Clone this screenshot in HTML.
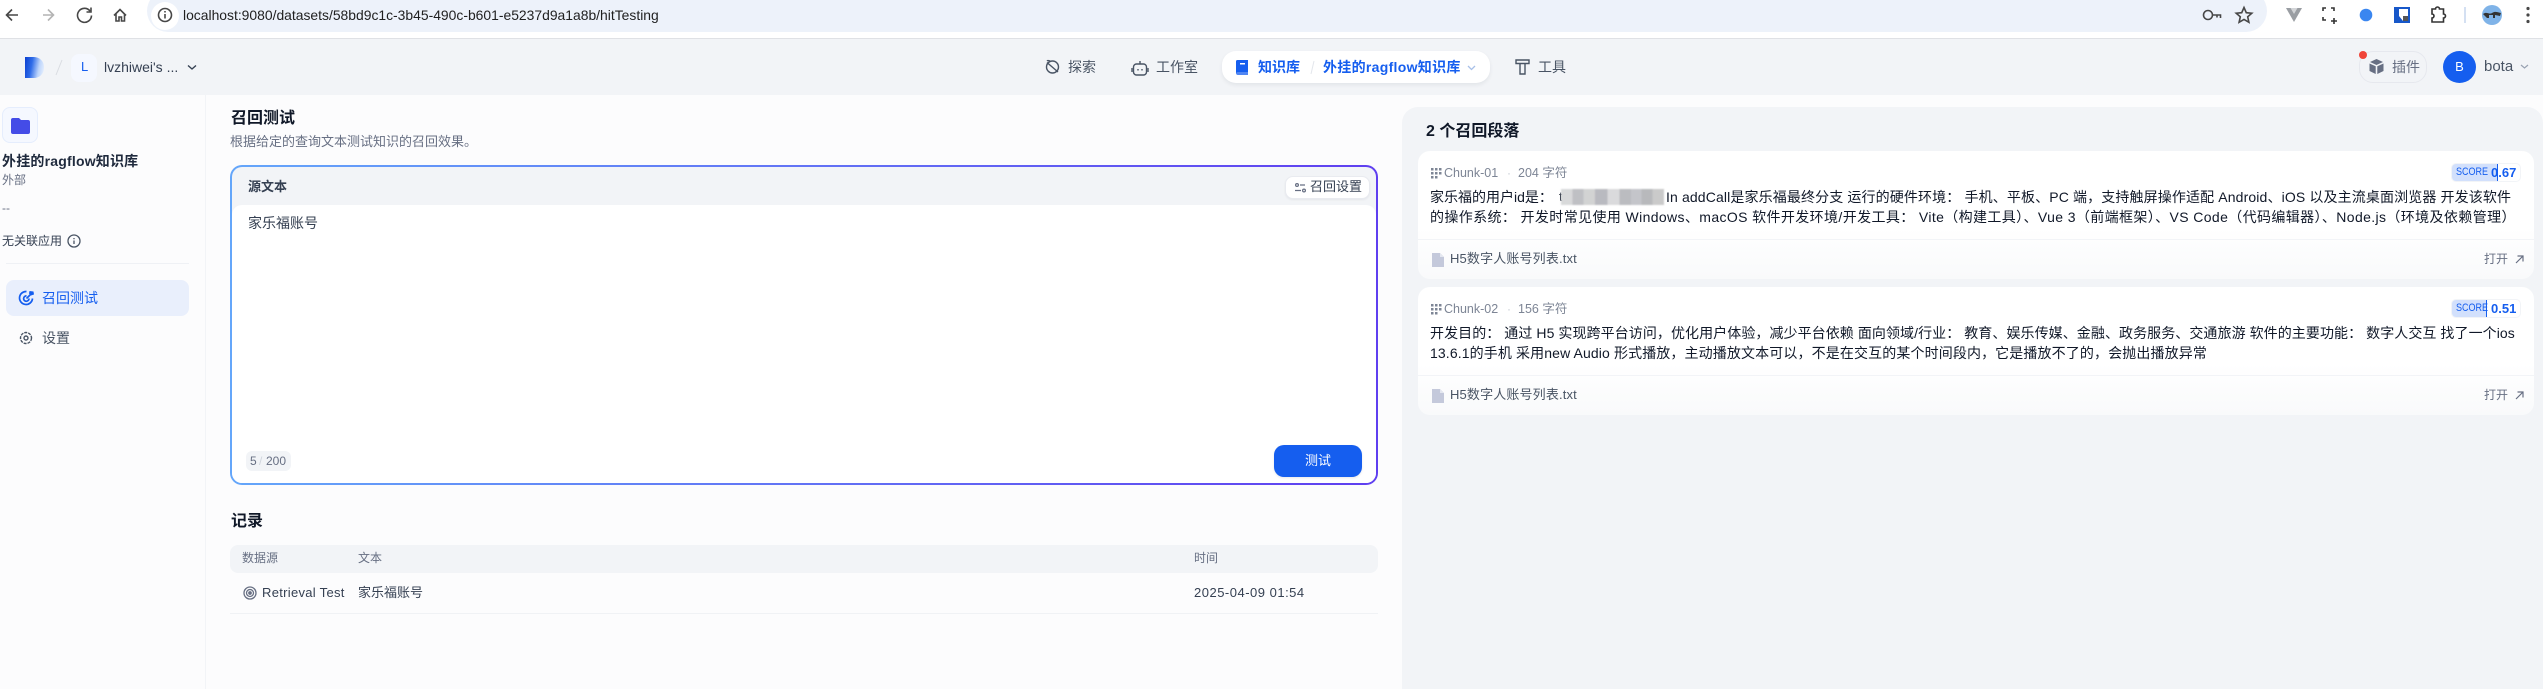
<!DOCTYPE html>
<html lang="zh"><head><meta charset="utf-8"><title>hitTesting</title>
<style>
*{box-sizing:border-box}
html,body{margin:0;padding:0;width:2543px;height:689px;overflow:hidden;background:#fcfcfd;font-family:"Liberation Sans","Noto Sans CJK SC",sans-serif;color:#354052}
.t{position:absolute;white-space:nowrap;line-height:20px;font-size:14px}
.b{position:absolute}
svg{position:absolute;overflow:visible}
.g{color:#676f83}
.k{color:#101828}
.sc{font-size:11px;color:#155eef;transform:scaleX(.82);transform-origin:left center}
.card{position:absolute;left:1418px;width:1116px;height:128px;border-radius:12px;background:linear-gradient(180deg,#fff 0%,#fff 60%,#f9fafb 100%)}
</style></head><body>
<!-- browser bar -->
<div class="b" style="left:0;top:0;width:2543px;height:38px;background:#fff"></div>
<div class="b" style="left:0;top:38px;width:2543px;height:1px;background:#dfe1e5"></div>
<div class="b" style="left:147px;top:-10px;width:2120px;height:42px;background:#edf2fa;border-radius:21px"></div>
<div class="b" style="left:151px;top:2px;width:28px;height:28px;background:#fff;border-radius:50%"></div>
<svg style="left:0;top:0" width="2543" height="38" fill="none" stroke="#474747" stroke-width="1.6">
<path d="M18 15H7M12 9.500 6.500 15l5.500 5.500"/>
<path d="M54 15H43M48 9.500 53.500 15 48 20.500" stroke="#b4b4b4"/>
<path d="M90 11a7 7 0 1 0 1.500 4.500M91 7.500v4.500h-4.500"/>
<path d="M114 15.500 120 9.500l6 6M116 14v7h3v-4h2.500v4h3v-7"/>
<circle cx="165" cy="15" r="6.500"/><path d="M165 14v4.500M165 11v1.500"/>
<circle cx="2208" cy="15" r="4.500"/><path d="M2212.500 15h8v3M2217 15v2.500"/>
<path d="M2244 7.500l2.300 5.200 5.500.5-4.100 3.600 1.200 5.500-4.900-2.900-4.900 2.900 1.200-5.500-4.100-3.600 5.500-.5z"/>
<path d="M2286 8h16l-8 14z" fill="#9a9ea3" stroke="none"/><path d="M2290.500 8h7l-3.500 6z" fill="#d3d5d8" stroke="none"/>
<path d="M2323 11V8h3M2331 8h3v3M2323 17v3h3M2337 21h-6M2334 18v6" stroke="#333"/>
<circle cx="2366" cy="15" r="6.300" fill="#3a86f0" stroke="none"/>
<path d="M2394 7h16v16h-16z" fill="#1757c9" stroke="none"/><path d="M2399 9h9v12h-5l-4-5z" fill="#fff" stroke="none"/><rect x="2403" y="16" width="5" height="5" fill="#555" stroke="none"/>
<path d="M2432 9h3.500a2 2 0 0 1 4 0h4v5a2 2 0 0 1 0 4v4h-11.500v-4a2 2 0 0 0 0-4z" stroke="#333"/>
<path d="M2465 7v16" stroke="#c9d8ef"/>
<circle cx="2492" cy="15" r="10" fill="#7fb3e8" stroke="none"/><path d="M2483 14c4-3 6 1 9-1s5-1 9 0l-1 3-5-1v3h-2v-3h-4v3h-2z" fill="#333" stroke="none"/>
<g fill="#474747" stroke="none"><circle cx="2528" cy="8.500" r="1.600"/><circle cx="2528" cy="15" r="1.600"/><circle cx="2528" cy="21.500" r="1.600"/></g>
</svg>
<div class="t" style="left:183px;top:5px;font-size:13.900px;color:#1f1f1f">localhost:9080/datasets/58bd9c1c-3b45-490c-b601-e5237d9a1a8b/hitTesting</div>

<!-- app header -->
<div class="b" style="left:0;top:39px;width:2543px;height:56px;background:#f2f4f7"></div>
<div class="b" style="left:25px;top:57px;width:19px;height:21px;border-radius:0 10px 10px 0;background:linear-gradient(100deg,#0b3fd0 0%,#2f6ce8 35%,#bcd4fb 70%,#eef4fe 100%)"></div>
<svg style="left:0;top:0" width="120" height="95" fill="none"><path d="M62 60 56 75" stroke="#d9dce2"/><path d="M188 65.500l4 3.500 4-3.500" stroke="#354052" stroke-width="1.400"/></svg>
<div class="b" style="left:71px;top:54px;width:26px;height:28px;border-radius:8px;background:#f5f8ff"></div>
<div class="t" style="left:81px;top:57px;color:#155eef;font-size:13px">L</div>
<div class="t" style="left:104px;top:57px">lvzhiwei's ...</div>

<svg style="left:1040px;top:55px" width="120" height="26" fill="none" stroke="#495464" stroke-width="1.400">
<circle cx="12.500" cy="12" r="6"/><path d="M7 7.500 18 17M7 6c1-1 3 0 4 .5"/>
<rect x="93.500" y="9" width="13" height="11" rx="3"/><path d="M100 9V6M98 14v1.500M102 14v1.500M92 13v4M108 13v4"/>
</svg>
<div class="t g" style="left:1068px;top:57px;color:#495464">探索</div>
<div class="t g" style="left:1156px;top:57px;color:#495464">工作室</div>
<div class="b" style="left:1222px;top:51px;width:268px;height:32px;border-radius:14px;background:#fff;box-shadow:0 2px 4px rgba(16,24,40,.07)"></div>
<svg style="left:1236px;top:60px" width="13" height="15"><path d="M0 1.500A1.500 1.500 0 0 1 1.500 0H12v12H2a2 2 0 0 0-2 1.500z" fill="#155eef"/><path d="M0 13a2 2 0 0 1 2-1.500h10V15H2a2 2 0 0 1-2-2z" fill="#155eef" opacity=".75"/><rect x="4" y="3" width="5" height="1.500" fill="#fff"/></svg>
<div class="t" style="left:1258px;top:57px;color:#155eef;font-weight:bold">知识库</div>
<svg style="left:1308px;top:60px" width="180" height="16" fill="none"><path d="M6 1 3 14" stroke="#e3e6ec"/><path d="M160 6l3.500 3.500L167 6" stroke="#a8c0e8" stroke-width="1.300"/></svg>
<div class="t" style="left:1323px;top:57px;color:#155eef;font-weight:bold;letter-spacing:.3px">外挂的ragflow知识库</div>
<svg style="left:1514px;top:58px" width="18" height="18" fill="none" stroke="#495464" stroke-width="1.400"><path d="M2 2h13v3.500H2zM6 5.500h5V16H6z"/></svg>
<div class="t" style="left:1538px;top:57px;color:#495464">工具</div>

<div class="b" style="left:2359px;top:51px;width:68px;height:32px;border-radius:14px;border:1px solid #e6e8ee"></div>
<div class="b" style="left:2359px;top:51px;width:8px;height:8px;border-radius:50%;background:#f04438"></div>
<svg style="left:2369px;top:59px" width="15" height="16"><path d="M7.500 0 14 3 7.500 6 1 3z" fill="#676f83"/><path d="M.5 4.500l6.200 2.800V15L.5 12zM14.500 4.500 8.300 7.300V15l6.200-3z" fill="#676f83"/></svg>
<div class="t g" style="left:2392px;top:57px">插件</div>
<div class="b" style="left:2443px;top:51px;width:33px;height:32px;border-radius:50%;background:#155eef"></div>
<div class="t" style="left:2443px;top:57px;width:33px;text-align:center;color:#fff;font-size:13px">B</div>
<div class="t" style="left:2484px;top:57px;font-size:15px;color:#495464">bota</div>
<svg style="left:2520px;top:64px" width="9" height="6" fill="none"><path d="M1 1l3.500 3L8 1" stroke="#98a2b2" stroke-width="1.200"/></svg>

<!-- sidebar -->
<div class="b" style="left:205px;top:95px;width:1px;height:594px;background:#f2f4f7"></div>
<div class="b" style="left:2px;top:107px;width:36px;height:36px;border-radius:8px;background:#f5f8ff;border:1px solid #e5edfd"></div>
<svg style="left:11px;top:116px" width="19" height="18"><path d="M2 2h6l2 2h7a2 2 0 0 1 2 2v10a2 2 0 0 1-2 2H2a2 2 0 0 1-2-2V4a2 2 0 0 1 2-2z" fill="#444ce7"/></svg>
<div class="t k" style="left:2px;top:151px;font-weight:bold;color:#1f2a3d;letter-spacing:.2px">外挂的ragflow知识库</div>
<div class="t g" style="left:2px;top:170px;font-size:12px">外部</div>
<div class="t g" style="left:2px;top:198px;font-size:12px">--</div>
<div class="t" style="left:2px;top:231px;font-size:12px">无关联应用</div>
<svg style="left:67px;top:234px" width="14" height="14" fill="none" stroke="#495464" stroke-width="1.300"><circle cx="7" cy="7" r="6"/><path d="M7 6.500V10M7 4v1.300"/></svg>
<div class="b" style="left:6px;top:263px;width:183px;height:1px;background:#eff1f5"></div>
<div class="b" style="left:6px;top:280px;width:183px;height:36px;border-radius:8px;background:#e9effc"></div>
<svg style="left:18px;top:290px" width="17" height="17" fill="none" stroke="#155eef" stroke-width="1.700"><path d="M14.500 8.500a6.500 6.500 0 1 1-6-7"/><path d="M11 8.500a2.700 2.700 0 1 1-2.500-2.600"/><path d="M8.500 8.500 13 4"/><path d="M11.500 1l4 .5.500 3-3 1-2-2z" fill="#155eef" stroke="none"/></svg>
<div class="t" style="left:42px;top:288px;color:#155eef">召回测试</div>
<svg style="left:19px;top:331px" width="14" height="14" fill="none" stroke="#495464" stroke-width="1.400"><circle cx="7" cy="7" r="2"/><circle cx="7" cy="7" r="5.500" stroke-dasharray="3 1"/></svg>
<div class="t" style="left:42px;top:328px;color:#495464">设置</div>

<!-- main left -->
<div class="t k" style="left:231px;top:109px;font-size:16px;font-weight:bold">召回测试</div>
<div class="t g" style="left:230px;top:132px;font-size:13px">根据给定的查询文本测试知识的召回效果。</div>
<div class="b" style="left:230px;top:165px;width:1148px;height:320px;border-radius:12px;background:linear-gradient(90deg,#64a6fa,#5f3ff0);padding:2px">
<div style="position:relative;width:1144px;height:316px;border-radius:10px;background:#f2f4f7">
<div style="position:absolute;left:0;top:38px;width:1144px;height:278px;background:#fff;border-radius:10px"></div>
</div></div>
<div class="t" style="left:248px;top:177px;font-size:13px;font-weight:bold">源文本</div>
<div class="b" style="left:1285px;top:176px;width:85px;height:23px;border-radius:8px;background:#fff;border:1px solid #e9ebf0;box-shadow:0 1px 2px rgba(16,24,40,.06)"></div>
<svg style="left:1295px;top:183px" width="11" height="10" fill="none" stroke="#676f83" stroke-width="1.200"><circle cx="2" cy="2" r="1.400"/><path d="M5 2h5M0 7.500h6"/><circle cx="9" cy="7.500" r="1.400"/></svg>
<div class="t" style="left:1310px;top:177px;font-size:13px">召回设置</div>
<div class="t" style="left:248px;top:213px">家乐福账号</div>
<div class="b" style="left:246px;top:451px;width:45px;height:20px;border-radius:6px;background:#f2f4f7"></div>
<div class="t g" style="left:250px;top:451px;font-size:12px">5</div><div class="t" style="left:259px;top:451px;font-size:12px;color:#d0d5dd">/</div><div class="t g" style="left:266px;top:451px;font-size:12px">200</div>
<div class="b" style="left:1274px;top:445px;width:88px;height:32px;border-radius:10px;background:#155eef;box-shadow:0 1px 2px rgba(16,24,40,.1)"></div>
<div class="t" style="left:1274px;top:451px;width:88px;text-align:center;color:#fff;font-size:13px">测试</div>

<div class="t k" style="left:231px;top:512px;font-size:16px;font-weight:bold">记录</div>
<div class="b" style="left:230px;top:545px;width:1148px;height:28px;border-radius:8px;background:#f2f4f7"></div>
<div class="t g" style="left:242px;top:548px;font-size:12px">数据源</div>
<div class="t g" style="left:358px;top:548px;font-size:12px">文本</div>
<div class="t g" style="left:1194px;top:548px;font-size:12px">时间</div>
<svg style="left:243px;top:586px" width="14" height="14" fill="none" stroke="#676f83" stroke-width="1.300"><circle cx="7" cy="7" r="6"/><circle cx="7" cy="7" r="3.500"/><circle cx="7" cy="7" r="1.200" fill="#676f83"/></svg>
<div class="t" style="left:262px;top:583px;font-size:13px;letter-spacing:.3px">Retrieval Test</div>
<div class="t" style="left:358px;top:583px;font-size:13px">家乐福账号</div>
<div class="t" style="left:1194px;top:583px;font-size:13px;letter-spacing:.5px">2025-04-09 01:54</div>
<div class="b" style="left:230px;top:613px;width:1148px;height:1px;background:#f0f2f5"></div>

<!-- right panel -->
<div class="b" style="left:1402px;top:107px;width:1141px;height:582px;border-radius:16px 16px 0 0;background:#f2f4f7"></div>
<div class="t k" style="left:1426px;top:122px;font-size:16px;font-weight:bold">2 个召回段落</div>

<div class="card" style="top:151px"></div>
<svg style="left:1431px;top:168px" width="11" height="11" fill="#7d8595"><path d="M0 0h2.500v2.500H0zM4 0h2.500v2.500H4zM8 0h2.500v2.500H8zM0 4h2.500v2.500H0zM4 4h2.500v2.500H4zM8 4h2.500v2.500H8zM0 8h2.500v2.500H0zM4 8h2.500v2.500H4z"/></svg>
<div class="t" style="left:1444px;top:163px;font-size:12.500px;color:#7d8595">Chunk-01</div>
<div class="t" style="left:1507px;top:163px;font-size:12px;color:#c5cad3">·</div>
<div class="t" style="left:1518px;top:163px;font-size:12.500px;color:#7d8595">204 字符</div>
<div class="b" style="left:2451px;top:163px;width:70px;height:19px;border-radius:5px;background:#fff;border:1px solid #f2f4f7;overflow:hidden"><div style="width:46px;height:19px;background:#d2e0fc;border-right:1px solid #155eef"></div></div>
<div class="t sc" style="left:2456px;top:162px">SCORE</div>
<div class="t" style="left:2491px;top:163px;font-size:13px;font-weight:bold;color:#155eef">0.67</div>

<div class="t k" style="left:1430px;top:187px">家乐福的用户id是：</div>
<div class="t k" style="left:1559px;top:187px;font-size:13px">ta</div>
<div class="b" style="left:1561px;top:189px;width:103px;height:16px;filter:blur(.8px);background:linear-gradient(90deg,#d8d9da 0 11%,#bfc0c4 11% 22%,#d2d3d3 22% 33%,#b9bac0 33% 45%,#dadadc 45% 57%,#bbbcc0 57% 68%,#c4c5ca 68% 78%,#b8b9bc 78% 89%,#cacaca 89% 100%)"></div>
<div class="t k" style="left:1666px;top:187px;letter-spacing:.13px">In addCall是家乐福最终分支 运行的硬件环境： 手机、平板、PC 端，支持触屏操作适配 Android、iOS 以及主流桌面浏览器 开发该软件</div>
<div class="t k" style="left:1430px;top:207px;letter-spacing:.38px">的操作系统： 开发时常见使用 Windows、macOS 软件开发环境/开发工具： Vite（构建工具）、Vue 3（前端框架）、VS Code（代码编辑器）、Node.js（环境及依赖管理）</div>
<div class="b" style="left:1418px;top:239px;width:1116px;height:1px;background:#f2f4f7"></div>
<svg style="left:1432px;top:253px" width="12" height="14"><path d="M0 0h8l4 4v10H0z" fill="#c4c9db"/><path d="M8 0l4 4H8z" fill="#e4e7f0"/></svg>
<div class="t" style="left:1450px;top:249px;font-size:13px;color:#495464;letter-spacing:.15px">H5数字人账号列表.txt</div>
<div class="t g" style="left:2484px;top:249px;font-size:12px">打开</div>
<svg style="left:2515px;top:255px" width="9" height="9" fill="none" stroke="#676f83" stroke-width="1.200"><path d="M1 8 8 1M2.500 1H8v5.500"/></svg>

<div class="card" style="top:287px"></div>
<svg style="left:1431px;top:304px" width="11" height="11" fill="#7d8595"><path d="M0 0h2.500v2.500H0zM4 0h2.500v2.500H4zM8 0h2.500v2.500H8zM0 4h2.500v2.500H0zM4 4h2.500v2.500H4zM8 4h2.500v2.500H8zM0 8h2.500v2.500H0zM4 8h2.500v2.500H4z"/></svg>
<div class="t" style="left:1444px;top:299px;font-size:12.500px;color:#7d8595">Chunk-02</div>
<div class="t" style="left:1507px;top:299px;font-size:12px;color:#c5cad3">·</div>
<div class="t" style="left:1518px;top:299px;font-size:12.500px;color:#7d8595">156 字符</div>
<div class="b" style="left:2451px;top:299px;width:70px;height:19px;border-radius:5px;background:#fff;border:1px solid #f2f4f7;overflow:hidden"><div style="width:35px;height:19px;background:#d2e0fc;border-right:1px solid #155eef"></div></div>
<div class="t sc" style="left:2456px;top:298px">SCORE</div>
<div class="t" style="left:2491px;top:299px;font-size:13px;font-weight:bold;color:#155eef">0.51</div>

<div class="t k" style="left:1430px;top:323px;letter-spacing:.07px">开发目的： 通过 H5 实现跨平台访问，优化用户体验，减少平台依赖 面向领域/行业： 教育、娱乐传媒、金融、政务服务、交通旅游 软件的主要功能： 数字人交互 找了一个ios</div>
<div class="t k" style="left:1430px;top:343px;letter-spacing:.12px">13.6.1的手机 采用new Audio 形式播放，主动播放文本可以，不是在交互的某个时间段内，它是播放不了的，会抛出播放异常</div>
<div class="b" style="left:1418px;top:375px;width:1116px;height:1px;background:#f2f4f7"></div>
<svg style="left:1432px;top:389px" width="12" height="14"><path d="M0 0h8l4 4v10H0z" fill="#c4c9db"/><path d="M8 0l4 4H8z" fill="#e4e7f0"/></svg>
<div class="t" style="left:1450px;top:385px;font-size:13px;color:#495464;letter-spacing:.15px">H5数字人账号列表.txt</div>
<div class="t g" style="left:2484px;top:385px;font-size:12px">打开</div>
<svg style="left:2515px;top:391px" width="9" height="9" fill="none" stroke="#676f83" stroke-width="1.200"><path d="M1 8 8 1M2.500 1H8v5.500"/></svg>
</body></html>
